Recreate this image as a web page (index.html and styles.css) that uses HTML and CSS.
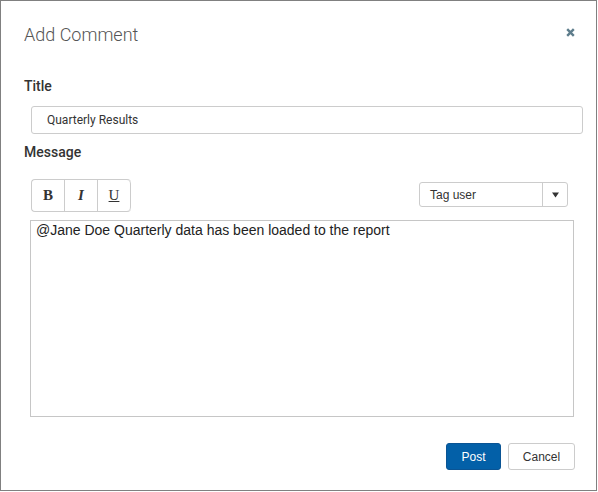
FILE: index.html
```html
<!DOCTYPE html>
<html>
<head>
<meta charset="utf-8">
<link rel="stylesheet" href="styles.css">
</head>
<body>
<div class="dialog">
  <div class="header">
    <h1 class="title">Add Comment</h1>
    <span class="close" aria-label="Close">
      <svg width="9" height="9" viewBox="0 0 9 9"><path d="M1.2 1.2 L7.8 7.8 M7.8 1.2 L1.2 7.8" stroke="#5e7d8c" stroke-width="2.4" stroke-linecap="butt"/></svg>
    </span>
  </div>
  <div class="label label-title">Title</div>
  <div class="input">Quarterly Results</div>
  <div class="label label-msg">Message</div>
  <div class="toolbar-row">
    <div class="format-group">
      <span class="fmt fmt-b">B</span>
      <span class="fmt fmt-i">I</span>
      <span class="fmt fmt-u">U</span>
    </div>
    <div class="select">
      <span class="select-text">Tag user</span>
      <span class="select-arrow">
        <svg width="7" height="6" viewBox="0 0 7 6"><path d="M0 0.5 H7 L3.5 5.5 Z" fill="#333"/></svg>
      </span>
    </div>
  </div>
  <div class="textarea">@Jane Doe Quarterly data has been loaded to the report</div>
  <div class="footer">
    <span class="btn btn-primary">Post</span>
    <span class="btn btn-default">Cancel</span>
  </div>
</div>
</body>
</html>
```
FILE: styles.css
```css
html, body {
  margin: 0;
  padding: 0;
  background: #ffffff;
}

.dialog {
  width: 597px;
  height: 491px;
  box-sizing: border-box;
  border: 1px solid #808080;
  padding: 22px 23px 0 23px;
  font-family: Roboto, "Liberation Sans", sans-serif;
  color: #333;
  background: #fff;
}

.header {
  display: flex;
  justify-content: space-between;
  align-items: flex-start;
  height: 24px;
}

.title {
  margin: 0;
  font-size: 18px;
  line-height: 24px;
  font-weight: 300;
  color: #555;
}

.close {
  display: block;
  width: 9px;
  height: 9px;
  margin-top: 5px;
  margin-right: -2px;
}

.close svg {
  display: block;
}

.label {
  font-size: 14px;
  line-height: 17px;
  font-weight: 500;
  color: #333;
}

.label-title {
  margin-top: 31px;
}

.label-msg {
  margin-top: 10px;
}

.input {
  margin-top: 11px;
  margin-left: 7px;
  width: 552px;
  height: 28px;
  box-sizing: border-box;
  border: 1px solid #cccccc;
  border-radius: 3px;
  padding-left: 15px;
  font-size: 12px;
  line-height: 26px;
  color: #333;
}

.toolbar-row {
  display: flex;
  justify-content: space-between;
  align-items: flex-start;
  margin-top: 18px;
  margin-left: 7px;
}

.format-group {
  display: flex;
  border: 1px solid #cccccc;
  border-right: none;
  border-radius: 4px;
  height: 33px;
  box-sizing: border-box;
  overflow: hidden;
}

.fmt {
  display: flex;
  align-items: center;
  justify-content: center;
  width: 33px;
  box-sizing: border-box;
  border-right: 1px solid #cccccc;
  font-family: "Liberation Serif", serif;
  font-size: 15px;
  color: #333;
}

.fmt:last-child {
  border-radius: 0 4px 4px 0;
}

.fmt-b {
  font-weight: bold;
}

.fmt-i {
  font-style: italic;
  font-weight: bold;
}

.fmt-u {
  text-decoration: underline;
}

.select {
  display: flex;
  margin-top: 3px;
  margin-right: 5px;
  width: 149px;
  height: 25px;
  box-sizing: border-box;
  border: 1px solid #cccccc;
  border-radius: 3px;
  font-family: "Liberation Sans", Arial, sans-serif;
  font-size: 12px;
  color: #333;
}

.select-text {
  flex: 1;
  padding-left: 10px;
  line-height: 24px;
  border-right: 1px solid #cccccc;
}

.select-arrow {
  display: flex;
  align-items: center;
  justify-content: center;
  width: 24px;
}

.select-arrow svg {
  display: block;
}

.textarea {
  margin-top: 8px;
  margin-left: 6px;
  width: 544px;
  height: 197px;
  box-sizing: border-box;
  border: 1px solid #c6c6c6;
  padding: 1px 5px;
  font-family: "Liberation Sans", Arial, sans-serif;
  font-size: 14px;
  line-height: 16px;
  color: #222;
}

.footer {
  display: flex;
  justify-content: flex-end;
  gap: 7px;
  margin-top: 26px;
  margin-right: -2px;
}

.btn {
  display: flex;
  align-items: center;
  justify-content: center;
  height: 27px;
  box-sizing: border-box;
  border-radius: 3px;
  font-family: "Liberation Sans", Arial, sans-serif;
  font-size: 12px;
}

.btn-primary {
  width: 55px;
  background: #0360a8;
  border: 1px solid #0a5494;
  color: #fff;
}

.btn-default {
  width: 67px;
  background: #fff;
  border: 1px solid #cccccc;
  color: #333;
}
```
